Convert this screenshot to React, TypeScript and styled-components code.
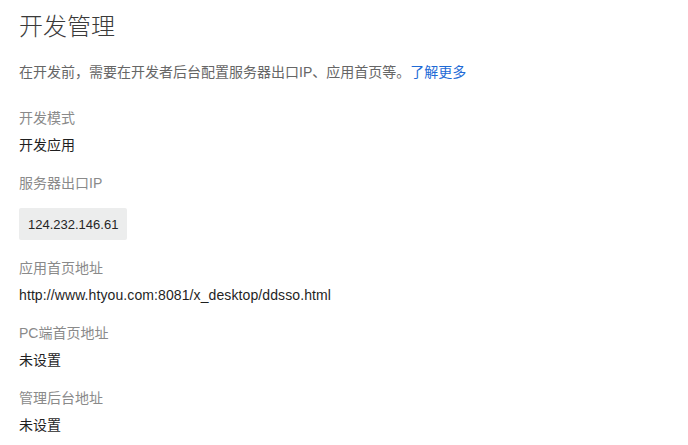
import React from "react";
import styled, { createGlobalStyle } from "styled-components";

const GlobalStyle = createGlobalStyle`
  html, body { margin: 0; padding: 0; background: #ffffff; }
  body { font-family: "Liberation Sans", "Noto Sans CJK SC", sans-serif; }
`;

const Page = styled.div`
  display: flex;
  flex-direction: column;
  padding: 9px 19px 0 19px;
`;

const Title = styled.h1`
  margin: 0;
  font-size: 24px;
  line-height: 32px;
  font-weight: 200;
  color: #3a3a3a;
  font-family: "Noto Sans CJK SC", sans-serif;
`;

const Description = styled.p`
  margin: 21px 0 0 0;
  font-size: 14px;
  line-height: 20px;
  color: #666666;
`;

const Link = styled.a`
  color: #1f6bd6;
  text-decoration: none;
`;

const FieldList = styled.div`
  display: flex;
  flex-direction: column;
  gap: 18px;
  margin-top: 26px;
`;

const Field = styled.div<{ $gap?: number }>`
  display: flex;
  flex-direction: column;
  align-items: flex-start;
  gap: ${(p) => p.$gap ?? 7}px;
`;

const Label = styled.div`
  font-size: 14px;
  line-height: 20px;
  color: #8a8a8a;
`;

const Value = styled.div<{ $mono?: boolean }>`
  font-size: 14px;
  line-height: 20px;
  color: #1f1f1f;
  letter-spacing: ${(p) => (p.$mono ? "0.1px" : "0")};
`;

const Chip = styled.div`
  height: 32px;
  display: flex;
  align-items: center;
  padding: 0 9px;
  background: #eceded;
  border-radius: 2px;
  font-size: 13px;
  color: #262626;
`;

export default function App() {
  return (
    <>
      <GlobalStyle />
      <Page>
        <Title>开发管理</Title>
        <Description>
          在开发前，需要在开发者后台配置服务器出口IP、应用首页等。<Link href="#">了解更多</Link>
        </Description>
        <FieldList>
          <Field>
            <Label>开发模式</Label>
            <Value>开发应用</Value>
          </Field>
          <Field $gap={15}>
            <Label>服务器出口IP</Label>
            <Chip>124.232.146.61</Chip>
          </Field>
          <Field>
            <Label>应用首页地址</Label>
            <Value $mono>http://www.htyou.com:8081/x_desktop/ddsso.html</Value>
          </Field>
          <Field>
            <Label>PC端首页地址</Label>
            <Value>未设置</Value>
          </Field>
          <Field>
            <Label>管理后台地址</Label>
            <Value>未设置</Value>
          </Field>
        </FieldList>
      </Page>
    </>
  );
}
